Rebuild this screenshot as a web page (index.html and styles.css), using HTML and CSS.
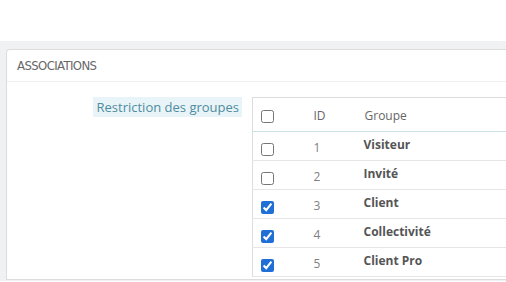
FILE: index.html
```html
<!DOCTYPE html>
<html lang="fr">
  <head>
    <meta charset="UTF-8" />
    <title>Associations</title>
    <link rel="stylesheet" href="styles.css">
  </head>
  <body>
    <div class="top-space"></div>
    <div class="page">
      <div class="panel">
        <div class="panel-heading">ASSOCIATIONS</div>
        <div class="form-row">
          <div class="label-col">
            <span class="label-text">Restriction des groupes</span>
          </div>
          <table class="groups">
            <thead>
              <tr>
                <th class="col-check"><input type="checkbox" /></th>
                <th class="col-id">ID</th>
                <th class="col-name">Groupe</th>
              </tr>
            </thead>
            <tbody>
              <tr>
                <td class="col-check"><input type="checkbox" /></td>
                <td class="col-id">1</td>
                <td class="col-name">Visiteur</td>
              </tr>
              <tr>
                <td class="col-check"><input type="checkbox" /></td>
                <td class="col-id">2</td>
                <td class="col-name">Invité</td>
              </tr>
              <tr>
                <td class="col-check"><input type="checkbox" checked /></td>
                <td class="col-id">3</td>
                <td class="col-name">Client</td>
              </tr>
              <tr>
                <td class="col-check"><input type="checkbox" checked /></td>
                <td class="col-id">4</td>
                <td class="col-name">Collectivité</td>
              </tr>
              <tr>
                <td class="col-check"><input type="checkbox" checked /></td>
                <td class="col-id">5</td>
                <td class="col-name">Client Pro</td>
              </tr>
            </tbody>
          </table>
        </div>
      </div>
    </div>
  </body>
</html>
```

FILE: styles.css
```css
* {
  box-sizing: border-box;
}

html,
body {
  height: 100%;
}

body {
  margin: 0;
  background: #fff;
  font-family: "Open Sans", sans-serif;
  color: #555;
  overflow: hidden;
}

.top-space {
  height: 41px;
}

.page {
  background: #eff1f2;
  padding: 8px 0 0 6px;
  height: 240px;
}

.panel {
  background: #fff;
  border: 1px solid #dcdcdc;
  border-right: none;
  border-radius: 4px 0 0 0;
  height: 231px;
}

.panel-heading {
  font-family: "Liberation Sans Narrow", "DejaVu Sans Condensed", sans-serif;
  font-stretch: condensed;
  font-size: 13px;
  letter-spacing: -0.6px;
  color: #666;
  height: 32px;
  line-height: 32px;
  padding-left: 10px;
  border-bottom: 1px solid #eee;
}

.form-row {
  display: flex;
  padding-top: 15px;
}

.label-col {
  width: 245px;
  flex: none;
  display: flex;
  justify-content: flex-end;
  align-items: flex-start;
  padding-right: 10px;
}

.label-text {
  background: #e9f4f8;
  color: #4e8ca0;
  font-size: 13px;
  line-height: 20px;
  padding: 0 3px 0 4px;
}

.groups {
  flex: 1;
  border-collapse: collapse;
  border-top: 1px solid #dcdcdc;
  border-left: 1px solid #dcdcdc;
  font-size: 12px;
}

.groups th {
  height: 34px;
  font-weight: normal;
  color: #666;
  text-align: left;
  border-bottom: 1px solid #c8dfe5;
  padding: 2px 0 0 0;
}

.groups td {
  height: 29px;
  border-bottom: 1px solid #e6e6e6;
  padding: 0;
  color: #808080;
}

.groups input {
  margin: 0;
  width: 13px;
  height: 13px;
  vertical-align: middle;
  accent-color: #1f6fd6;
}

.col-check {
  width: 48px;
  padding-left: 8px !important;
}

td.col-check {
  padding-top: 4px !important;
}

.col-id {
  width: 51px;
  padding-left: 13px !important;
}

td.col-id {
  padding-top: 3px !important;
}

td.col-name {
  font-weight: bold;
  color: #555;
  padding-left: 12px !important;
  padding-bottom: 4px !important;
}

th.col-name {
  padding-left: 13px !important;
}
```
